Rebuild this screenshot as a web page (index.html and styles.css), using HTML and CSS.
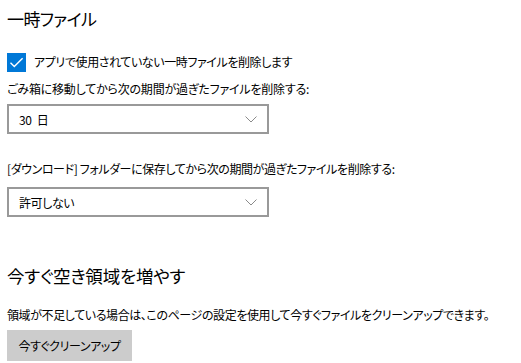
FILE: index.html
```html
<!DOCTYPE html>
<html lang="ja">
<head>
<meta charset="utf-8">
<title>一時ファイル</title>
<link rel="stylesheet" href="styles.css">
</head>
<body>
<div class="page">
  <h1 class="title">一時ファイル</h1>
  <div class="check-row">
    <span class="checkbox">
      <svg width="19" height="19" viewBox="0 0 19 19"><path d="M3.5 9.8 L7.3 13.6 L15.6 5.2" fill="none" stroke="#fff" stroke-width="1.4"/></svg>
    </span>
    <span class="text">アプリで使用されていない一時ファイルを削除します</span>
  </div>
  <div class="label first">ごみ箱に移動してから次の期間が過ぎたファイルを削除する:</div>
  <div class="select s1">
    <span class="value">30 日</span>
    <svg class="chev" width="12" height="7" viewBox="0 0 12 7"><path d="M0.5 0.5 L6 6 L11.5 0.5" fill="none" stroke="#8a8a8a" stroke-width="1"/></svg>
  </div>
  <div class="label second">[ダウンロード] フォルダーに保存してから次の期間が過ぎたファイルを削除する:</div>
  <div class="select s2">
    <span class="value">許可しない</span>
    <svg class="chev" width="12" height="7" viewBox="0 0 12 7"><path d="M0.5 0.5 L6 6 L11.5 0.5" fill="none" stroke="#8a8a8a" stroke-width="1"/></svg>
  </div>
  <h2 class="subtitle">今すぐ空き領域を増やす</h2>
  <p class="desc">領域が不足している場合は、このページの設定を使用して今すぐファイルをクリーンアップできます。</p>
  <button class="btn">今すぐクリーンアップ</button>
</div>
</body>
</html>
```
FILE: styles.css
```css
html, body {
  margin: 0;
  padding: 0;
  background: #fff;
}
.page {
  padding: 0 7px;
  font-family: "Noto Sans CJK JP", "Noto Sans", sans-serif;
  font-feature-settings: "palt";
  color: #000;
  font-size: 12px;
  letter-spacing: -0.4px;
}
.title {
  margin: 0;
  padding-top: 5px;
  font-size: 17px;
  letter-spacing: -0.6px;
  line-height: 28px;
  font-weight: normal;
}
.check-row {
  margin-top: 19px;
  height: 20px;
  display: flex;
  align-items: center;
  gap: 8px;
}
.checkbox {
  width: 19px;
  height: 19px;
  background: #0078d7;
  display: flex;
}
.text, .label, .desc {
  line-height: 18px;
  white-space: nowrap;
}
.label.first { margin-top: 8px; letter-spacing: -0.2px; }
.label.second { margin-top: 26px; }
.select {
  box-sizing: border-box;
  width: 262px;
  height: 30px;
  border: 2px solid #999;
  display: flex;
  align-items: center;
  justify-content: space-between;
  padding: 0 10px 0 10px;
}
.value {
  word-spacing: 3px;
}
.s1 { margin-top: 6px; }
.s2 { margin-top: 9px; }
.subtitle {
  margin: 46px 0 0;
  font-size: 17.5px;
  letter-spacing: -0.2px;
  line-height: 26px;
  font-weight: normal;
}
.desc {
  margin: 17px 0 0;
}
.btn {
  margin-top: 6px;
  width: 125px;
  height: 31px;
  border: none;
  background: #ccc;
  font: inherit;
  font-feature-settings: "palt";
  letter-spacing: -0.4px;
  color: #000;
  padding: 0;
}
```
